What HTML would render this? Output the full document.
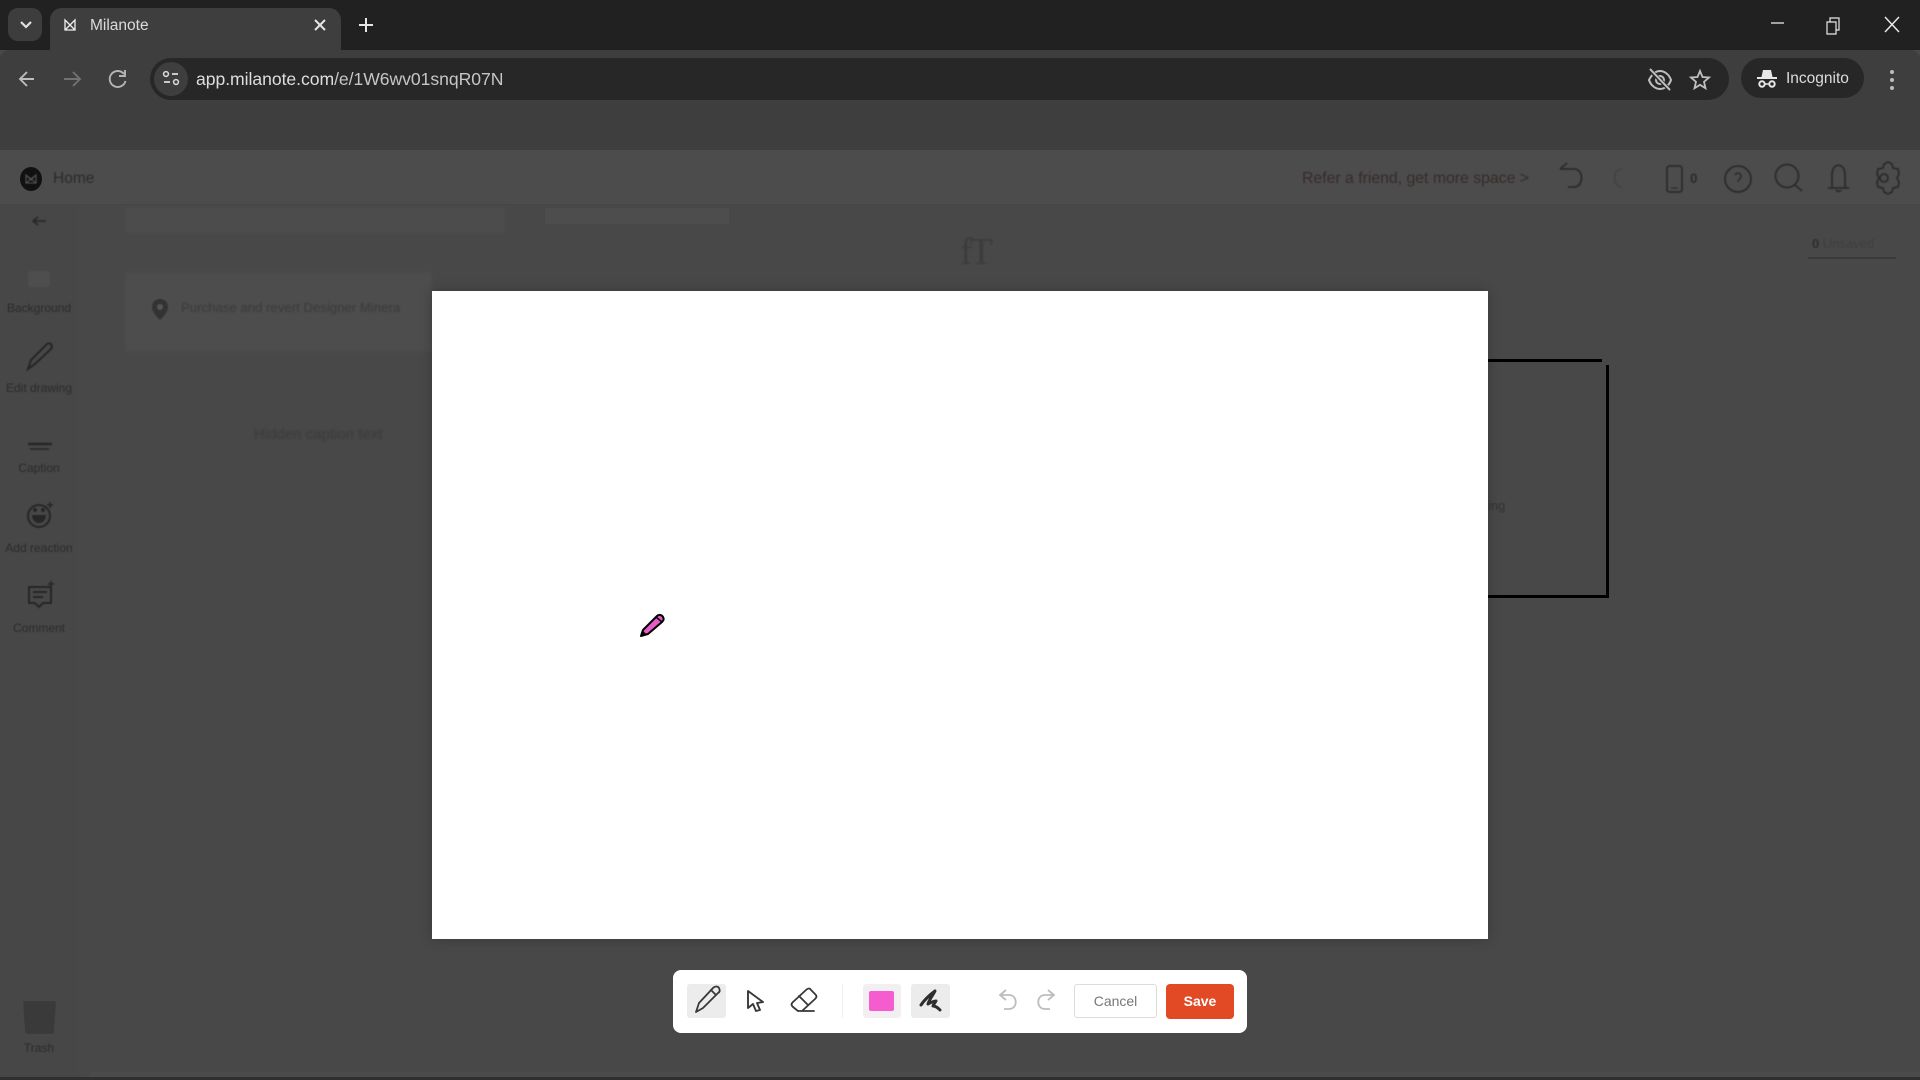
<!DOCTYPE html>
<html><head><meta charset="utf-8"><title>Milanote</title>
<style>
*{box-sizing:border-box}
html,body{margin:0;padding:0;width:1920px;height:1080px;overflow:hidden;background:#484848;font-family:"Liberation Sans",sans-serif}
.a{position:absolute}
svg{position:absolute;overflow:visible;fill:none}
.t{position:absolute;white-space:nowrap;line-height:1}
.lab{position:absolute;left:0;width:78px;text-align:center;font-size:12px;color:#2b2b2b;filter:blur(.6px);white-space:nowrap;line-height:12px}
</style></head><body>

<!-- tab strip -->
<div class="a" style="left:0;top:0;width:1920px;height:50px;background:#212121"></div>
<div class="a" style="left:8px;top:8px;width:34px;height:33px;border-radius:10px;background:#3d3d3d"></div>
<svg style="left:0;top:0" width="60" height="50"><path d="M21 22l5 5 5-5" stroke="#e0e0e0" stroke-width="2.2"/></svg>
<div class="a" style="left:50px;top:8px;width:291px;height:42px;border-radius:12px 12px 0 0;background:#3e3e3e"></div>
<svg style="left:60px;top:15px" width="20" height="20"><path d="M5 5l5 5 5-5v10H5zM5 15l10-10M15 15L5 5" stroke="#eee" stroke-width="1.300"/></svg>
<div class="t" style="left:90px;top:18px;font-size:15.5px;color:#dcdcdc">Milanote</div>
<svg style="left:310px;top:15px" width="20" height="20"><path d="M5 5l10 10M15 5L5 15" stroke="#e6e6e6" stroke-width="2"/></svg>
<svg style="left:356px;top:15px" width="20" height="20"><path d="M10 3v14M3 10h14" stroke="#e6e6e6" stroke-width="2"/></svg>
<svg style="left:1760px;top:10px" width="150" height="30" stroke="#e8e8e8" stroke-width="1.300"><path d="M11 13h13"/><path d="M67 12h9v12h-9zM70 12V8h9v12h-3" stroke-width="1.200"/><path d="M125 7l14 15M139 7l-14 15" stroke-width="1.500"/></svg>

<!-- browser toolbar -->
<div class="a" style="left:0;top:50px;width:1920px;height:100px;background:#3e3e3e;border-radius:10px 10px 0 0"></div>
<div class="a" style="left:150px;top:58px;width:1579px;height:42px;border-radius:21px;background:#272727"></div>
<div class="a" style="left:154px;top:62px;width:34px;height:34px;border-radius:17px;background:#3e3e3e"></div>
<svg style="left:0;top:50px" width="200" height="60" fill="none">
<path d="M34 29H20M27 22l-7 7 7 7" stroke="#bdbdbd" stroke-width="1.900"/>
<path d="M64 29h16M73 22l7 7-7 7" stroke="#727272" stroke-width="1.900"/>
<path d="M124 24a8 8 0 1 0 1.500 7M125 20v6h-6" stroke="#b4b4b4" stroke-width="1.900"/>
<circle cx="166" cy="24" r="2.400" stroke="#ddd" stroke-width="1.500"/><path d="M172 24h6M164 32h6" stroke="#ddd" stroke-width="1.800"/><circle cx="176" cy="32" r="2.400" stroke="#ddd" stroke-width="1.500"/>
</svg>
<div class="t" style="left:196px;top:71px;font-size:17.6px;color:#c6c6c6;letter-spacing:-.05px"><span style="color:#dedede">app.milanote.com</span>/e/1W6wv01snqR07N</div>
<svg style="left:1640px;top:58px" width="90" height="42">
<path d="M9 22c3-6 7-9 11-9s9 3 11 9c-2 6-7 9-11 9s-9-3-11-9z" stroke="#bfbfbf" stroke-width="2"/><circle cx="20" cy="22" r="4" stroke="#bfbfbf" stroke-width="2"/><path d="M10 12l20 20" stroke="#272727" stroke-width="4"/><path d="M10 11l20 21" stroke="#bfbfbf" stroke-width="2"/>
<path d="M60 13l2.500 6 6.500.5-5 4.300 1.500 6.400-5.500-3.400-5.500 3.400 1.500-6.400-5-4.300 6.500-.5z" stroke="#bfbfbf" stroke-width="1.800"/>
</svg>
<div class="a" style="left:1741px;top:58px;width:123px;height:40px;border-radius:20px;background:#272727"></div>
<svg style="left:1755px;top:66px" width="24" height="24"><path d="M6.500 11l1.500-7h8l1.500 7z" fill="#e8e8e8"/><path d="M2 12h20" stroke="#e8e8e8" stroke-width="2"/><circle cx="7" cy="18" r="2.700" stroke="#e8e8e8" stroke-width="2"/><circle cx="17" cy="18" r="2.700" stroke="#e8e8e8" stroke-width="2"/><path d="M10 18h4" stroke="#e8e8e8" stroke-width="1.500"/></svg>
<div class="t" style="left:1786px;top:71px;font-size:15.500px;color:#dcdcdc">Incognito</div>
<div class="a" style="left:1890px;top:70px;width:4px;height:4px;border-radius:2px;background:#bbb;box-shadow:0 8px 0 #bbb,0 16px 0 #bbb"></div>

<!-- app header -->
<div class="a" style="left:0;top:150px;width:1920px;height:55px;background:#4c4c4c;border-bottom:1px solid #464646"></div>
<div class="a" style="left:20px;top:167px;width:22px;height:24px;border-radius:50%;background:#111"></div>
<svg style="left:23px;top:171px;filter:blur(.4px)" width="16" height="16"><path d="M3 4l5 5 5-5v8H3zM3 12l10-8M13 12L3 4" stroke="#555" stroke-width="1.100"/></svg>
<div class="t" style="left:53px;top:171px;font-size:15.500px;color:#2b2b2b;filter:blur(.5px)">Home</div>
<div class="t" style="left:1302px;top:171px;font-size:15.800px;color:#382a2a;filter:blur(.5px)">Refer a friend, get more space &gt;</div>
<svg style="left:1550px;top:155px;filter:blur(.6px)" width="360" height="50" stroke="#2b2b2b" stroke-width="1.800">
<path d="M10 14h14c10 0 10 18 0 18h-6M17 8l-7 6" />
<path d="M72 14c-10 0-10 18 0 18" stroke="#434343"/>
<rect x="117" y="11" width="15" height="26" rx="2.500"/><path d="M121 33h7" stroke-width="1"/>
<circle cx="188" cy="24" r="13"/><path d="M185 20c2-3 6-2 6 1 0 3-3 3-3 6" stroke-width="1.500"/>
<circle cx="237" cy="21" r="11.500"/><path d="M245 30l7 6"/>
<path d="M278 33h21M282 33V20c0-13 13-13 13 0v13M286 35a3 3 0 0 0 5 0"/>
<path d="M338 9l4-2 4 2 1 4 5 1 1 5-2 4 2 4-1 5-5 1-1 4-4 2-4-2-1-4-5-1-1-5 2-4-2-4 1-5 5-1z" transform="translate(-4 0)"/><circle cx="334" cy="23" r="4"/>
</svg>
<div class="t" style="left:1690px;top:172px;font-size:13.500px;font-weight:bold;color:#2c2c2c;filter:blur(.4px)">0</div>

<!-- sidebar & dim canvas -->
<div class="a" style="left:0;top:205px;width:78px;height:875px;background:#474747"></div>
<div class="a" style="left:125px;top:207px;width:380px;height:26px;background:#4c4c4c;filter:blur(1px)"></div>
<div class="a" style="left:545px;top:208px;width:184px;height:16px;background:#4d4d4d"></div>
<div class="a" style="left:125px;top:272px;width:307px;height:80px;background:#4d4d4d;filter:blur(1px)"></div>
<svg style="left:150px;top:298px;filter:blur(.4px)" width="20" height="24"><path d="M10 1C4 1 2 6 2 9c0 5 5 10 8 13 3-3 8-8 8-13 0-3-2-8-8-8z" fill="#333"/><circle cx="10" cy="9" r="3" fill="#555"/></svg>
<div class="t" style="left:181px;top:301px;font-size:13.200px;color:#3a3a3a;filter:blur(.9px)">Purchase and revert Designer Minera</div>
<div class="t" style="left:254px;top:427px;font-size:15px;color:#3a3a3a;filter:blur(1.100px)">Hidden caption text</div>
<div class="t" style="left:960px;top:233px;font-family:'Liberation Serif',serif;font-size:38px;color:#3c3c3c;filter:blur(.9px);letter-spacing:-3px">fT</div>
<div class="t" style="left:1812px;top:237px;font-size:13px;color:#2e2e2e;filter:blur(.6px)"><b>0</b> <span style="color:#3f3f3f">Unsaved</span></div>
<div class="a" style="left:1808px;top:257px;width:88px;height:2px;background:#3a3a3a"></div>
<svg style="left:0;top:205px;filter:blur(.5px)" width="78" height="440" stroke="#262626" stroke-width="2">
<path d="M46 16H33M38 12l-5 4 5 4" stroke-width="1.500"/>
<rect x="28" y="66" width="22" height="16" rx="3" fill="#4e4e4e" stroke="none"/>
<path d="M28 164l3-9 16-16c4-2 6 2 4 5l-16 15z"/>
<path d="M28 239h24" stroke-width="2.500"/><path d="M30 244h19" stroke-width="1.500"/>
<circle cx="39" cy="311" r="11"/><path d="M33 311c1 8 11 8 12 0z" fill="#262626"/><circle cx="35" cy="305" r="1" /><circle cx="43" cy="305" r="1"/><path d="M47 300h6M50 297v6" stroke-width="1.500"/>
<path d="M29 382h22v16H43l-4 4-4-4h-6zM33 387h14M33 392h10"/><path d="M48 379h6M51 376v6" stroke-width="1.500"/>
</svg>
<div class="lab" style="top:302px">Background</div>
<div class="lab" style="top:382px">Edit drawing</div>
<div class="lab" style="top:462px">Caption</div>
<div class="lab" style="top:542px">Add reaction</div>
<div class="lab" style="top:622px">Comment</div>
<div class="a" style="left:23px;top:1001px;width:33px;height:33px;background:#3a3a3a;border-radius:0 0 5px 5px;clip-path:polygon(0 0,100% 0,93% 100%,7% 100%);filter:blur(.5px)"></div>
<div class="lab" style="top:1042px">Trash</div>
<div class="a" style="left:90px;top:1072px;width:1830px;height:5px;background:#4b4b4b"></div>
<div class="a" style="left:0;top:1077px;width:1920px;height:3px;background:#2f2f2f"></div>

<!-- drawing border behind modal -->
<div class="a" style="left:1480px;top:359px;width:122px;height:3px;background:#000"></div>
<div class="a" style="left:1606px;top:365px;width:3px;height:232px;background:#000"></div>
<div class="a" style="left:1480px;top:595px;width:129px;height:3px;background:#000"></div>
<div class="t" style="left:1488px;top:499px;font-size:13px;color:#333;filter:blur(.6px)">ing</div>

<!-- white drawing canvas -->
<div class="a" style="left:432px;top:291px;width:1056px;height:648px;background:#fff;box-shadow:0 0 12px rgba(0,0,0,.22)"></div>

<!-- pen cursor -->
<svg style="left:635px;top:608px" width="34" height="34">
<path d="M6 28l2-6L22 8c2-2 5-1 6 1s1 3-1 5L13 26z" fill="#e85ac8" stroke="#000" stroke-width="2" stroke-linejoin="round"/>
<path d="M6 28l1.500-5 3.500 3.500z" fill="#000" stroke="#000"/>
<path d="M21 9l6 5" stroke="#000" stroke-width="1.500"/>
</svg>

<!-- drawing toolbar -->
<div class="a" style="left:673px;top:970px;width:574px;height:63px;background:#fff;border-radius:8px"></div>
<div class="a" style="left:687px;top:984px;width:39px;height:34px;background:#ececec;border-radius:3px"></div>
<svg style="left:680px;top:975px" width="280" height="50" fill="none" stroke="#383838" stroke-width="1.800" stroke-linejoin="round" stroke-linecap="round">
<path d="M16 37l3-9 14-15c2-2 5-2 6 0s1 4-1 5L23 33z"/><path d="M31 15l5 5"/>
<path d="M68 16l0 17 5-4 3 7 4-1-3-7 6-1z" stroke-width="1.900"/>
<path d="M118 36l-5-4c-2-2-2-3 0-5l13-12c2-2 4-2 5 0l4 4c2 2 2 3 0 5l-13 12zM119 21l9 9M118 36h16"/>
</svg>
<div class="a" style="left:842px;top:984px;width:1px;height:34px;background:#f0f0f0"></div>
<div class="a" style="left:863px;top:984px;width:38px;height:34px;background:#f3eef2;border-radius:3px"></div>
<div class="a" style="left:869px;top:991px;width:25px;height:20px;background:#f45cd0;border-radius:2px"></div>
<div class="a" style="left:911px;top:984px;width:39px;height:34px;background:#ececec;border-radius:3px"></div>
<svg style="left:911px;top:984px" width="39" height="34" fill="none" stroke="#2e2e2e" stroke-width="3" stroke-linecap="round" stroke-linejoin="round">
<path d="M10 21C14 15 20 10 24 7c-2 4-6 9-7 13 3-2 7-3 8-3-1 2-3 4-3 5 3 0 5 2 7 4"/>
</svg>
<svg style="left:995px;top:988px" width="64" height="28" fill="none" stroke="#bdbdbd" stroke-width="1.800">
<path d="M5 7h9c9 0 9 14 0 14h-5M11 2L5 7l6 5"/>
<path d="M59 7h-9c-9 0-9 14 0 14h5M53 2l6 5-6 5"/>
</svg>
<div class="a" style="left:1074px;top:984px;width:83px;height:34px;border:1px solid #dcdcdc;border-radius:3px;text-align:center;font-size:14px;line-height:32px;color:#777">Cancel</div>
<div class="a" style="left:1166px;top:984px;width:68px;height:35px;background:#e24a26;border-radius:4px;text-align:center;font-size:14px;font-weight:bold;line-height:34px;color:#fff">Save</div>

</body></html>
